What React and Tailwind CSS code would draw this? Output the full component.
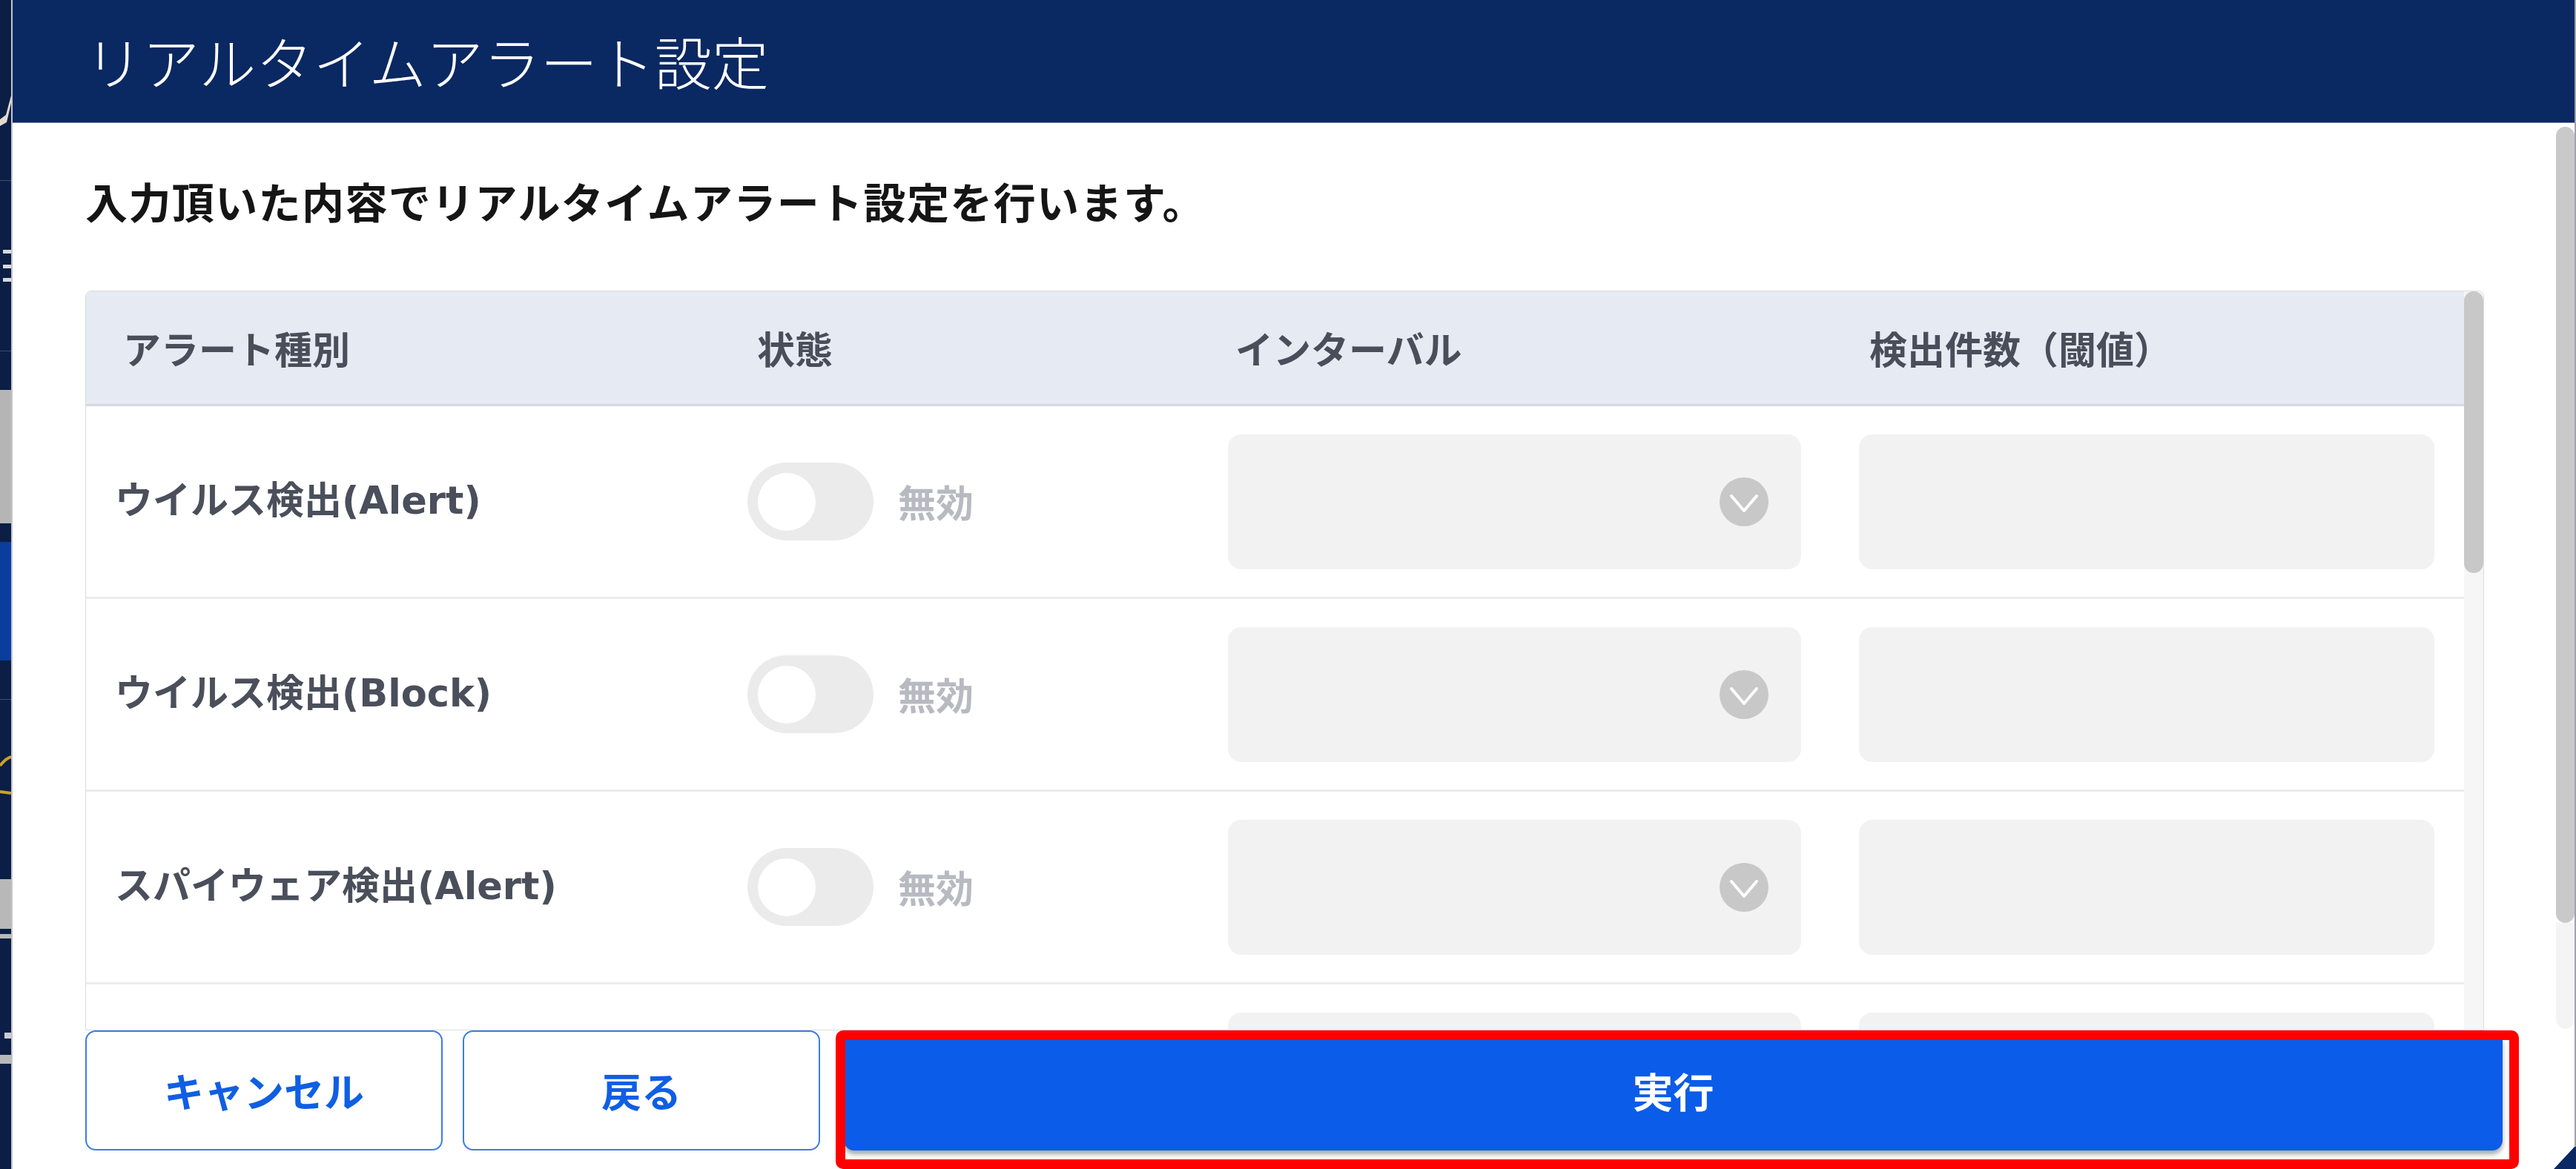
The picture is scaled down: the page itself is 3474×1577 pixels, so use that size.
import React from "react";

const rows = [
  "ウイルス検出(Alert)",
  "ウイルス検出(Block)",
  "スパイウェア検出(Alert)",
];

function Chevron() {
  return (
    <div className="w-[66px] h-[66px] rounded-full bg-[#c8c8c8] flex items-center justify-center">
      <svg width="66" height="66" viewBox="0 0 66 66">
        <polyline points="16,25 33,45 50,25" fill="none" stroke="#ffffff" strokeWidth="4" strokeLinecap="round" strokeLinejoin="round" />
      </svg>
    </div>
  );
}

function Row({ label }) {
  return (
    <div className="h-[260px] shrink-0 border-b-[3px] border-[#ececec] grid grid-cols-[892px_648px_851px_1fr] items-center">
      <div className="pl-[39px] pr-[20px]">
        {label && (
          <span className="block text-[51px] font-bold text-[#4a4f5b] leading-[1.3] font-['DejaVu_Sans','Noto_Sans_CJK_JP',sans-serif] whitespace-nowrap">
            {label}
          </span>
        )}
      </div>
      <div className="flex items-center">
        {label && (
          <>
            <div className="w-[170px] h-[105px] shrink-0 rounded-full bg-[#ebebeb] flex items-center">
              <div className="w-[78px] h-[78px] ml-[14px] rounded-full bg-white" />
            </div>
            <span className="ml-[33px] text-[51px] font-bold text-[#b7bac1] leading-[1.3] whitespace-nowrap">無効</span>
          </>
        )}
      </div>
      <div>
        <div className="w-[773px] h-[182px] rounded-[18px] bg-[#f2f2f2] flex items-center justify-end pr-[44px]">
          <Chevron />
        </div>
      </div>
      <div>
        <div className="w-[776px] h-[182px] rounded-[18px] bg-[#f2f2f2]" />
      </div>
    </div>
  );
}

function LeftStrip() {
  return (
    <div className="w-[15px] h-full shrink-0 flex flex-col bg-[#0a1e46]">
      <div className="h-[125px] shrink-0" />
      <div className="h-[45px] shrink-0">
        <svg width="15" height="45" viewBox="0 0 15 45">
          <polygon points="0,36 8,30 15,4 15,14 9,40 0,45" fill="#e3d9cc" />
        </svg>
      </div>
      <div className="h-[73px] shrink-0" />
      <div className="h-[1px] shrink-0 bg-[#3c4d70]" />
      <div className="h-[93px] shrink-0" />
      <div className="h-[5px] w-[11px] ml-[4px] shrink-0 bg-[#d6d9e0]" />
      <div className="h-[15px] shrink-0" />
      <div className="h-[5px] w-[11px] ml-[4px] shrink-0 bg-[#d6d9e0]" />
      <div className="h-[13px] shrink-0" />
      <div className="h-[5px] w-[11px] ml-[4px] shrink-0 bg-[#d6d9e0]" />
      <div className="h-[93px] shrink-0" />
      <div className="h-[1px] shrink-0 bg-[#3c4d70]" />
      <div className="h-[52px] shrink-0" />
      <div className="h-[180px] shrink-0 bg-[#b5b5b5]" />
      <div className="h-[25px] shrink-0" />
      <div className="h-[160px] shrink-0 bg-[#0b3d9f]" />
      <div className="h-[52px] shrink-0" />
      <div className="h-[1px] shrink-0 bg-[#3c4d70]" />
      <div className="h-[69px] shrink-0" />
      <div className="h-[70px] shrink-0">
        <svg width="15" height="70" viewBox="0 0 15 70">
          <path d="M0 20 Q8 10 15 8" fill="none" stroke="#c9a227" strokeWidth="4" />
          <path d="M0 55 L15 57" fill="none" stroke="#c9a227" strokeWidth="4" />
        </svg>
      </div>
      <div className="h-[103px] shrink-0" />
      <div className="h-[67px] shrink-0 bg-[#b8b8b8]" />
      <div className="h-[7px] shrink-0" />
      <div className="h-[6px] shrink-0 bg-[#b8b8b8]" />
      <div className="h-[127px] shrink-0" />
      <div className="h-[8px] w-[9px] ml-[6px] shrink-0 bg-[#c8cbd2]" />
      <div className="h-[22px] shrink-0" />
      <div className="h-[12px] shrink-0 bg-[#b8b8b8]" />
      <div className="flex-1" />
    </div>
  );
}

export default function App() {
  return (
    <div className="w-[3474px] h-[1577px] overflow-hidden bg-[#0a1e46] flex relative font-['Noto_Sans_CJK_JP','Noto_Sans',sans-serif]">
      <LeftStrip />
      <div className="flex-1 h-full border-l-2 border-[#c4c6ca] bg-white flex flex-col min-w-0">
        <div className="h-[166px] shrink-0 bg-[#0a2862] border-b border-[#7d8aa8] flex items-center pl-[98px]">
          <h1 className="text-[77px] font-light text-white leading-[1.3] whitespace-nowrap">リアルタイムアラート設定</h1>
        </div>
        <div className="flex-1 flex min-h-0">
          <div className="flex-1 flex flex-col pl-[98px] min-w-0">
            <div className="h-[226px] shrink-0 flex items-center pb-[17px]">
              <p className="text-[57px] tracking-[1.4px] font-bold text-[#151515] leading-[1.3] whitespace-nowrap">
                入力頂いた内容でリアルタイムアラート設定を行います。
              </p>
            </div>
            <div className="h-[998px] w-[3235px] shrink-0 border border-[#dcdcdc] rounded-t-[8px] overflow-hidden flex">
              <div className="w-[3207px] flex flex-col overflow-hidden">
                <div className="h-[155px] shrink-0 bg-[#e6eaf3] border-b-[3px] border-[#d5d9e3] grid grid-cols-[892px_648px_851px_1fr] items-center text-[51px] font-bold text-[#4a4e5a] leading-[1.3] whitespace-nowrap">
                  <div className="pl-[50px]">アラート種別</div>
                  <div className="pl-[13px]">状態</div>
                  <div className="pl-[10px]">インターバル</div>
                  <div className="pl-[14px]">検出件数（閾値）</div>
                </div>
                {rows.map((r) => (
                  <Row key={r} label={r} />
                ))}
                <Row label="" />
              </div>
              <div className="w-[26px] bg-[#f6f6f6] flex flex-col">
                <div className="h-[380px] w-full rounded-full bg-[#c8c8c8]" />
              </div>
            </div>
            <div className="h-[162px] shrink-0 flex">
              <button className="w-[482px] h-full rounded-[14px] border-2 border-[#3b7de8] bg-white text-[54px] font-bold text-[#0f5fe3] leading-[1.3]">
                キャンセル
              </button>
              <button className="w-[482px] h-full ml-[27px] rounded-[14px] border-2 border-[#3b7de8] bg-white text-[54px] font-bold text-[#0f5fe3] leading-[1.3]">
                戻る
              </button>
              <button className="flex-1 h-full ml-[32px] mr-[72px] rounded-[14px] bg-[#0b5ce8] shadow-[0_5px_6px_rgba(0,0,0,0.35)] text-[55px] font-bold text-white leading-[1.3]">
                実行
              </button>
            </div>
            <div className="h-[25px] shrink-0" />
          </div>
          <div className="w-[25px] shrink-0 flex flex-col">
            <div className="h-[5px] shrink-0" />
            <div className="h-[1074px] shrink-0 rounded-full bg-[#c9c9c9]" />
            <div className="h-[143px] shrink-0 bg-[#f4f4f4] rounded-b-full" />
          </div>
        </div>
      </div>
      <div className="w-[2px] h-full bg-[#9ea3ad] shrink-0" />
      <div className="absolute left-[1127px] top-[1390px] w-[2270px] h-[187px] border-[13px] border-[#ff0000] rounded-[10px] pointer-events-none" />
      <svg className="absolute left-[3444px] top-[1545px]" width="30" height="32" viewBox="0 0 30 32">
        <polygon points="0,32 28,2 30,2 30,32" fill="#0a2862" />
      </svg>
    </div>
  );
}
